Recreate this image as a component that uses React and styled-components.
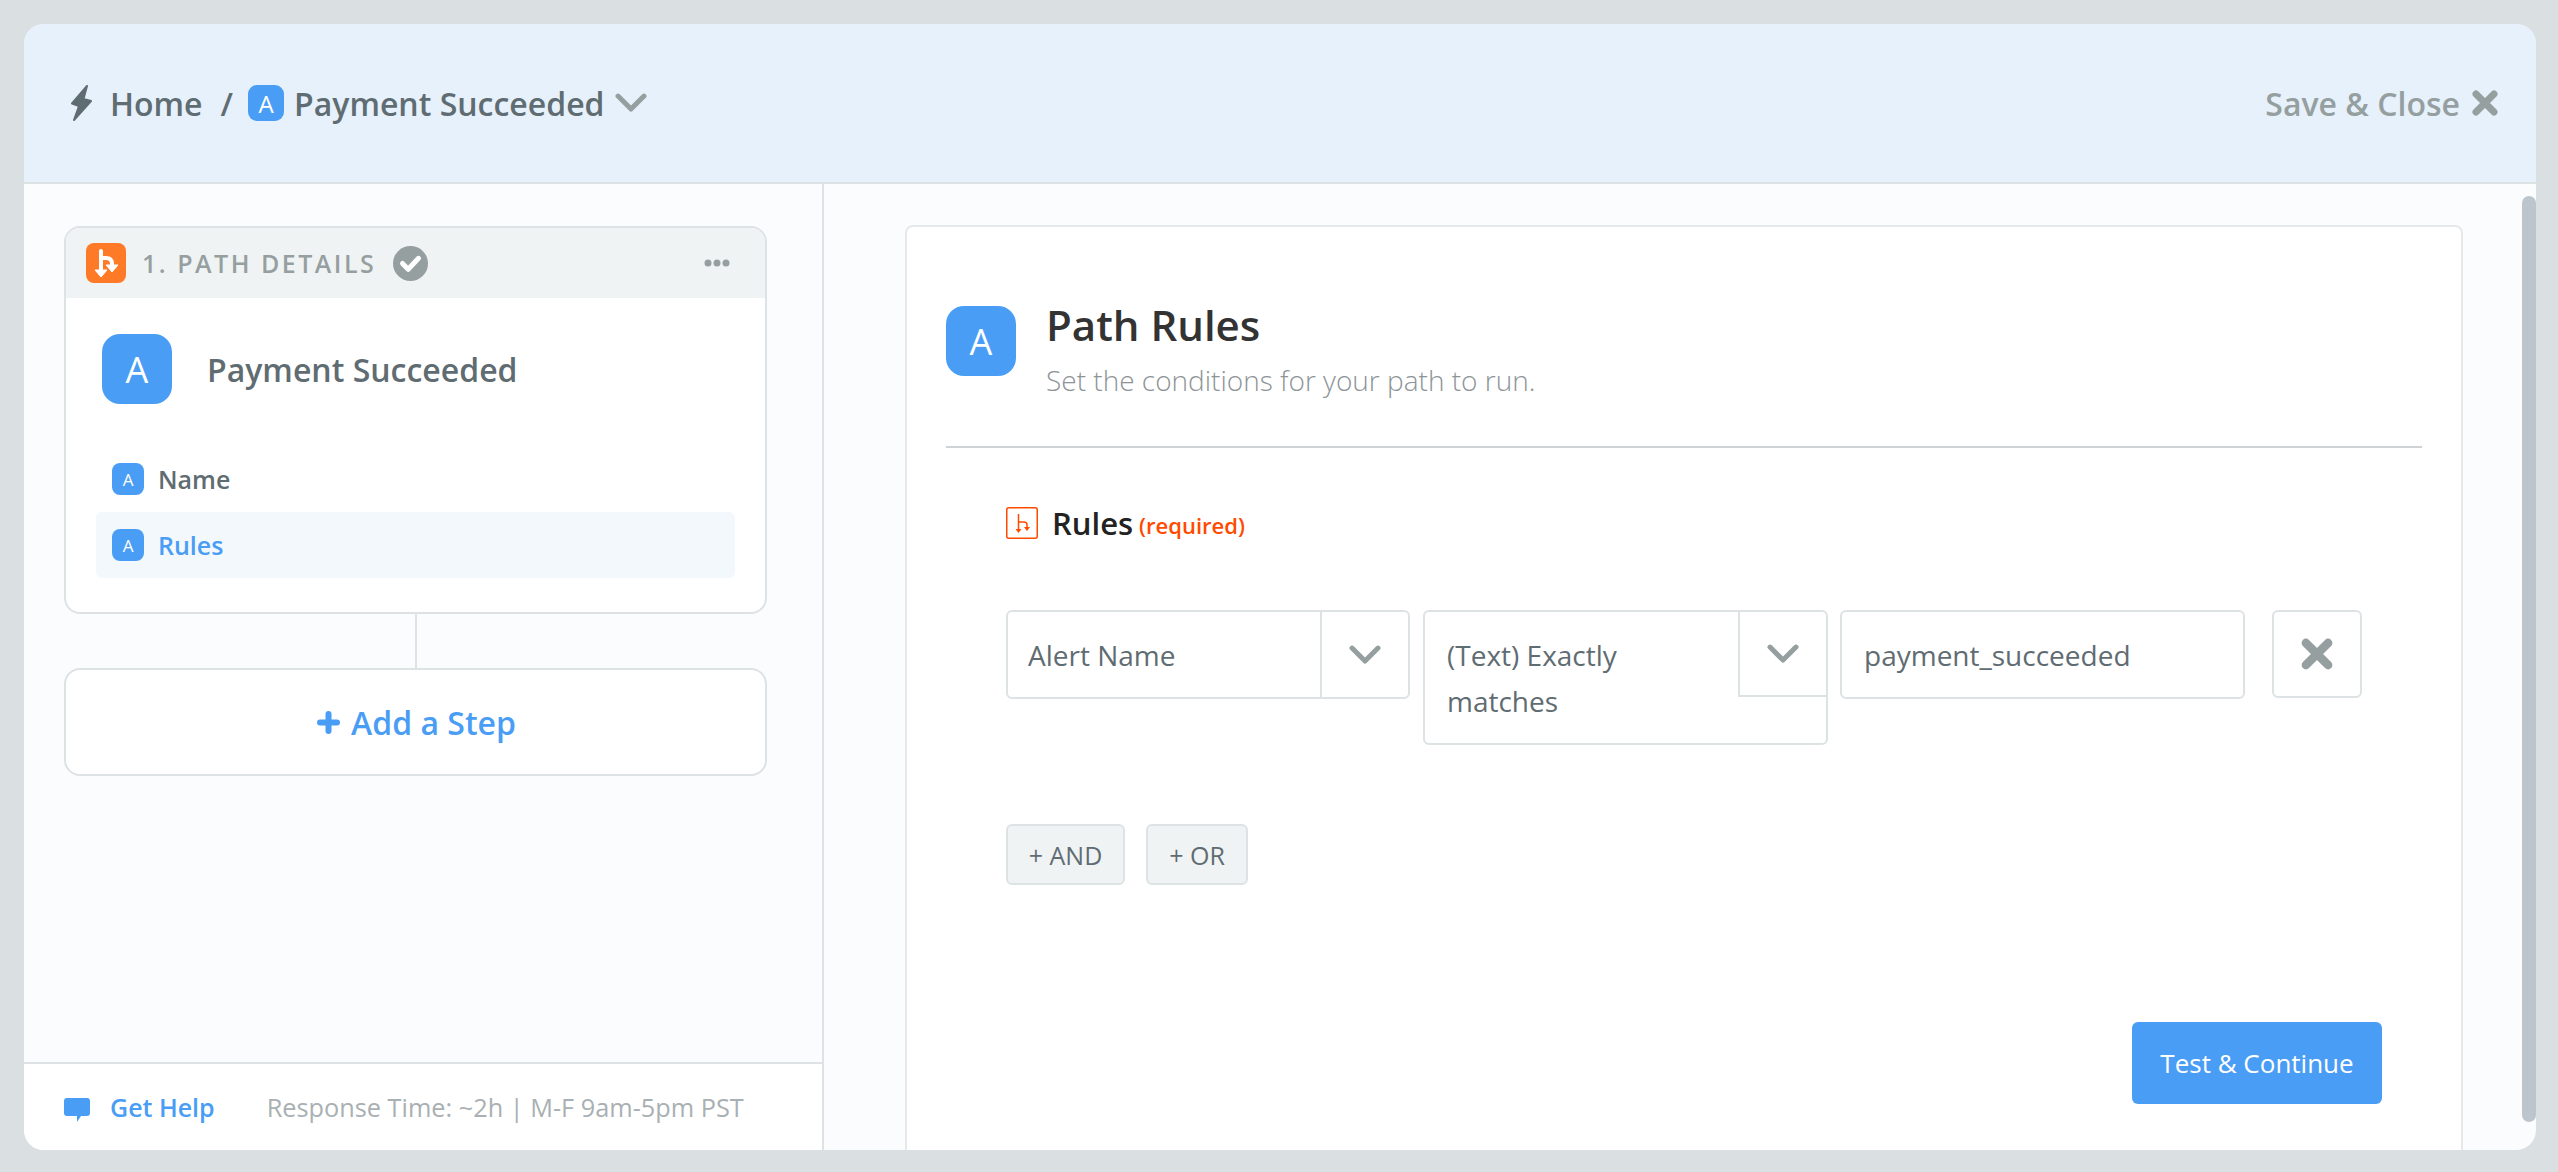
import styled, { createGlobalStyle } from 'styled-components';

const Global = createGlobalStyle`
	* {
		box-sizing: border-box;
	}
	body {
		margin: 0;
		background: #dadfe2;
		font-family: 'Open Sans', 'Noto Sans', sans-serif;
		overflow: hidden;
	}
`;

const blue = '#4a9df4';
const line = '#dde2e5';
const slate = '#5f6c72';
const grey = '#969fa0';

const Page = styled.div`
	height: 1172px;
	padding: 24px 22px 22px 24px;
`;
const Shell = styled.div`
	position: relative;
	height: 100%;
	display: flex;
	flex-direction: column;
	border-radius: 20px;
	overflow: hidden;
	background: #fbfcfe;
`;
const Header = styled.header`
	height: 160px;
	flex: none;
	display: flex;
	align-items: center;
	justify-content: space-between;
	padding: 0 38px 0 47px;
	background: #e6f1fb;
	border-bottom: 2px solid ${line};
`;
const Crumbs = styled.div`
	display: flex;
	align-items: center;
	font-size: 32px;
	font-weight: 600;
	color: ${slate};
`;
const Slash = styled.span`
	margin: 0 15px 0 18px;
`;
const CrumbName = styled.span`
	margin: 0 10px 0 10px;
`;
const Badge = styled.span`
	flex: none;
	display: flex;
	align-items: center;
	justify-content: center;
	width: ${(p) => p.$size}px;
	height: ${(p) => p.$size}px;
	border-radius: ${(p) => Math.round(p.$size * 0.26)}px;
	background: ${blue};
	color: white;
	font-size: ${(p) => p.$font}px;
	font-weight: 400;
`;
const Close = styled.div`
	display: flex;
	align-items: center;
	gap: 12px;
	font-size: 32px;
	font-weight: 600;
	color: ${grey};
`;
const Body = styled.div`
	flex: 1;
	min-height: 0;
	display: flex;
`;
const Sidebar = styled.aside`
	width: 800px;
	flex: none;
	display: flex;
	flex-direction: column;
	border-right: 2px solid ${line};
`;
const Steps = styled.div`
	flex: 1;
	padding: 42px 55px 0 40px;
`;
const StepCard = styled.section`
	height: 388px;
	border: 2px solid ${line};
	border-radius: 16px;
	overflow: hidden;
	background: white;
`;
const StepHead = styled.div`
	height: 70px;
	display: flex;
	align-items: center;
	padding: 0 35px 0 20px;
	background: #f0f3f4;
`;
const StepTitle = styled.span`
	margin-left: 16px;
	font-size: 25px;
	font-weight: 600;
	letter-spacing: 2.5px;
	color: ${grey};
`;
const Spacer = styled.span`
	flex: 1;
`;
const StepName = styled.div`
	display: flex;
	align-items: center;
	gap: 35px;
	padding: 36px 0 0 36px;
	font-size: 32px;
	font-weight: 600;
	color: ${slate};
`;
const StepLinks = styled.div`
	padding: 0 30px;
	margin-top: 42px;
`;
const StepLink = styled.div`
	height: 66px;
	display: flex;
	align-items: center;
	gap: 14px;
	padding-left: 16px;
	border-radius: 6px;
	font-size: 25px;
	font-weight: 600;
	color: ${(p) => (p.$active ? blue : slate)};
	background: ${(p) => (p.$active ? '#f3f8fd' : 'transparent')};
`;
const Connector = styled.div`
	width: 2px;
	height: 54px;
	margin: 0 auto;
	background: ${line};
`;
const AddStep = styled.div`
	height: 108px;
	display: flex;
	align-items: center;
	justify-content: center;
	gap: 11px;
	padding-left: 2px;
	border: 2px solid ${line};
	border-radius: 16px;
	background: white;
	font-size: 32px;
	font-weight: 600;
	color: ${blue};
`;
const Footer = styled.footer`
	height: 88px;
	flex: none;
	display: flex;
	align-items: center;
	padding: 0 0 0 40px;
	border-top: 2px solid ${line};
	background: white;
	font-size: 25px;
`;
const HelpLink = styled.span`
	margin: 0 52px 0 20px;
	font-weight: 600;
	color: ${blue};
`;
const HelpNote = styled.span`
	font-size: 25.3px;
	color: #a9b0b3;
`;
const Main = styled.main`
	flex: 1;
	min-width: 0;
	padding: 41px 0 0 81px;
	overflow: hidden;
`;
const Panel = styled.section`
	width: 1558px;
	height: 1000px;
	padding: 79px 39px 0;
	border: 2px solid #e6e8ea;
	border-radius: 8px;
	background: white;
`;
const PanelHead = styled.div`
	display: flex;
	gap: 30px;
	height: 142px;
	border-bottom: 2px solid #cfd2d4;
`;
const PanelTitle = styled.h1`
	margin: -6px 0 0;
	font-size: 42px;
	line-height: 50px;
	font-weight: 600;
	color: #333;
`;
const PanelSub = styled.p`
	margin: 11px 0 0;
	font-size: 28px;
	line-height: 38px;
	font-weight: 300;
	color: #8d9497;
`;
const Rules = styled.div`
	padding: 59px 0 0 60px;
`;
const RulesLabel = styled.div`
	display: flex;
	align-items: center;
	gap: 6px;
	height: 32px;
	font-size: 31px;
	font-weight: 600;
	color: #222;
`;
const RulesName = styled.span`
	margin-left: 8px;
`;
const Required = styled.span`
	margin-top: 4px;
	font-size: 22px;
	font-weight: 600;
	color: #ff4a00;
`;
const RuleRow = styled.div`
	display: flex;
	align-items: flex-start;
	margin-top: 71px;
`;
const Select = styled.div`
	width: ${(p) => p.$width}px;
	margin-right: ${(p) => p.$gap}px;
	display: flex;
	align-items: flex-start;
	border: 2px solid ${line};
	border-radius: 6px;
`;
const SelectText = styled.div`
	flex: 1;
	padding: 20px 30px 19px ${(p) => p.$inset}px;
	font-size: 28px;
	line-height: 46px;
	color: ${slate};
`;
const Arrow = styled.div`
	width: 88px;
	height: 85px;
	flex: none;
	display: flex;
	align-items: center;
	justify-content: center;
	border-left: 2px solid ${line};
	border-bottom: ${(p) => (p.$wrapped ? `2px solid ${line}` : 'none')};
`;
const Input = styled.div`
	width: 405px;
	height: 89px;
	margin-right: 27px;
	padding: 20px 0 0 22px;
	border: 2px solid ${line};
	border-radius: 6px;
	font-size: 28px;
	line-height: 46px;
	color: ${slate};
`;
const Remove = styled.div`
	width: 90px;
	height: 88px;
	display: flex;
	align-items: center;
	justify-content: center;
	border: 2px solid ${line};
	border-radius: 6px;
`;
const Logic = styled.div`
	display: flex;
	gap: 21px;
	margin-top: 79px;
`;
const LogicButton = styled.div`
	width: ${(p) => p.$width}px;
	height: 61px;
	display: flex;
	align-items: center;
	justify-content: center;
	border: 2px solid ${line};
	border-radius: 6px;
	background: #f0f3f4;
	font-size: 25px;
	color: ${slate};
`;
const Actions = styled.div`
	display: flex;
	justify-content: flex-end;
	margin: 137px 40px 0 0;
`;
const Primary = styled.div`
	width: 250px;
	height: 82px;
	display: flex;
	align-items: center;
	justify-content: center;
	border-radius: 6px;
	background: ${blue};
	font-size: 26px;
	color: white;
`;
const Scrollbar = styled.div`
	position: absolute;
	top: 172px;
	right: 0;
	width: 14px;
	height: 926px;
	border-radius: 7px;
	background: #bdc5cc;
`;
const BoltIcon = styled.svg`
	margin-right: 18px;
`;
const CheckIcon = styled.svg`
	margin-left: 17px;
`;
const ChatIcon = styled.svg`
	margin-top: 5px;
`;

const Bolt = () => (
	<BoltIcon width="21" height="36" viewBox="0 0 21 36">
		<path d="M16 1 L1 18.5 L8 21 L3 35 L20 16 L12.5 14 Z" fill={slate} stroke={slate} strokeWidth="2" strokeLinejoin="round" />
	</BoltIcon>
);

const Chevron = ({ size = 32 }) => (
	<svg width={size} height={size * 0.6} viewBox="0 0 32 19" fill="none">
		<path d="M3 3 L16 16 L29 3" stroke={grey} strokeWidth="5" strokeLinecap="round" strokeLinejoin="round" />
	</svg>
);

const Cross = ({ size }) => (
	<svg width={size} height={size} viewBox="0 0 26 26" fill="none">
		<path d="M4 4 L22 22 M22 4 L4 22" stroke={grey} strokeWidth="7" strokeLinecap="round" />
	</svg>
);

const PathBadge = () => (
	<svg width="40" height="40" viewBox="0 0 40 40">
		<rect width="40" height="40" rx="8" fill="#ff7a26" />
		<g fill="none" stroke="white" strokeWidth="4" strokeLinecap="round">
			<path d="M15 8 V28" />
			<path d="M15 15 H20 Q26 15 26 21 V24" />
		</g>
		<path d="M9 27 H21 L15 34 Z M20 22 H32 L26 29 Z" fill="white" stroke="white" strokeLinejoin="round" />
	</svg>
);

const PathOutline = () => (
	<svg width="32" height="32" viewBox="0 0 32 32">
		<rect x="0.75" y="0.75" width="30.5" height="30.5" rx="2" fill="white" stroke="#ff4a00" strokeWidth="1.5" />
		<g fill="none" stroke="#ff4a00" strokeWidth="1.5">
			<path d="M12.5 7 V23" />
			<path d="M12.5 15 H18 Q21 15 21 18 V20" />
		</g>
		<path d="M9.5 22 H15.5 L12.5 26 Z M18 20 H24 L21 24 Z" fill="#ff4a00" />
	</svg>
);

const Check = () => (
	<CheckIcon width="35" height="35" viewBox="0 0 35 35">
		<circle cx="17.5" cy="17.5" r="17.5" fill={grey} />
		<path d="M9.5 17.5 L15.2 23.3 L25.5 12.3" fill="none" stroke="white" strokeWidth="5" strokeLinecap="round" strokeLinejoin="round" />
	</CheckIcon>
);

const Dots = () => (
	<svg width="26" height="8" viewBox="0 0 26 8">
		<circle cx="4" cy="4" r="3.5" fill={grey} />
		<circle cx="13" cy="4" r="3.5" fill={grey} />
		<circle cx="22" cy="4" r="3.5" fill={grey} />
	</svg>
);

const Plus = () => (
	<svg width="23" height="23" viewBox="0 0 23 23" fill="none">
		<path d="M11.5 3 V20 M3 11.5 H20" stroke={blue} strokeWidth="6" strokeLinecap="round" />
	</svg>
);

const Chat = () => (
	<ChatIcon width="26" height="24" viewBox="0 0 26 24">
		<path d="M3 0 H23 Q26 0 26 3 V15 Q26 18 23 18 H17 L13 24 L13 18 H3 Q0 18 0 15 V3 Q0 0 3 0 Z" fill={blue} />
	</ChatIcon>
);

const App = () => (
	<Page>
		<Global />
		<Shell>
			<Header>
				<Crumbs>
					<Bolt />
					Home
					<Slash>/</Slash>
					<Badge $size={36} $font={24}>A</Badge>
					<CrumbName>Payment Succeeded</CrumbName>
					<Chevron />
				</Crumbs>
				<Close>
					Save &amp; Close
					<Cross size={26} />
				</Close>
			</Header>
			<Body>
				<Sidebar>
					<Steps>
						<StepCard>
							<StepHead>
								<PathBadge />
								<StepTitle>1. PATH DETAILS</StepTitle>
								<Check />
								<Spacer />
								<Dots />
							</StepHead>
							<StepName>
								<Badge $size={70} $font={36}>A</Badge>
								Payment Succeeded
							</StepName>
							<StepLinks>
								<StepLink>
									<Badge $size={32} $font={17}>A</Badge>
									Name
								</StepLink>
								<StepLink $active>
									<Badge $size={32} $font={17}>A</Badge>
									Rules
								</StepLink>
							</StepLinks>
						</StepCard>
						<Connector />
						<AddStep>
							<Plus />
							Add a Step
						</AddStep>
					</Steps>
					<Footer>
						<Chat />
						<HelpLink>Get Help</HelpLink>
						<HelpNote>Response Time: ~2h | M-F 9am-5pm PST</HelpNote>
					</Footer>
				</Sidebar>
				<Main>
					<Panel>
						<PanelHead>
							<Badge $size={70} $font={36}>A</Badge>
							<div>
								<PanelTitle>Path Rules</PanelTitle>
								<PanelSub>Set the conditions for your path to run.</PanelSub>
							</div>
						</PanelHead>
						<Rules>
							<RulesLabel>
								<PathOutline />
								<RulesName>Rules</RulesName>
								<Required>(required)</Required>
							</RulesLabel>
							<RuleRow>
								<Select $width={404} $gap={13}>
									<SelectText $inset={20}>Alert Name</SelectText>
									<Arrow>
										<Chevron />
									</Arrow>
								</Select>
								<Select $width={405} $gap={12}>
									<SelectText $inset={22}>(Text) Exactly matches</SelectText>
									<Arrow $wrapped>
										<Chevron />
									</Arrow>
								</Select>
								<Input>payment_succeeded</Input>
								<Remove>
									<Cross size={32} />
								</Remove>
							</RuleRow>
							<Logic>
								<LogicButton $width={119}>+ AND</LogicButton>
								<LogicButton $width={102}>+ OR</LogicButton>
							</Logic>
						</Rules>
						<Actions>
							<Primary>Test &amp; Continue</Primary>
						</Actions>
					</Panel>
				</Main>
			</Body>
			<Scrollbar />
		</Shell>
	</Page>
);

export default App;
